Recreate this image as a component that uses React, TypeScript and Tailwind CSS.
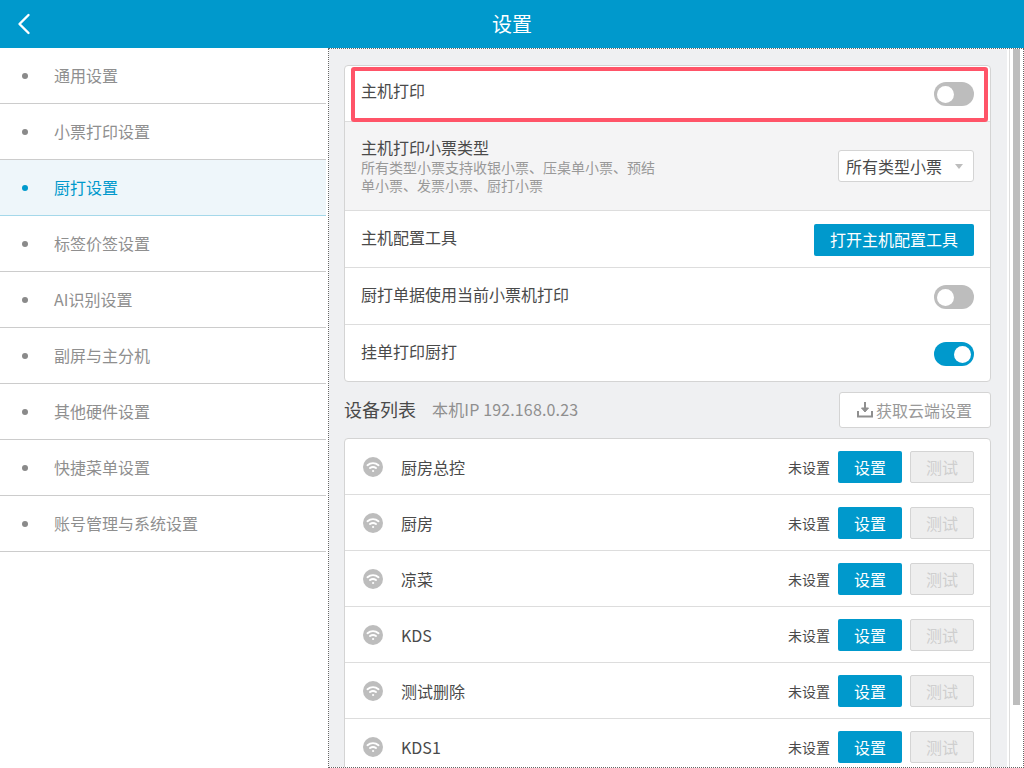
import React from 'react';

const menuItems = [
  '通用设置',
  '小票打印设置',
  '厨打设置',
  '标签价签设置',
  'AI识别设置',
  '副屏与主分机',
  '其他硬件设置',
  '快捷菜单设置',
  '账号管理与系统设置',
];

const devices = ['厨房总控', '厨房', '凉菜', 'KDS', '测试删除', 'KDS1'];

const Toggle = ({ on = false }: { on?: boolean }) => (
  <div
    className={`flex h-6 w-10 items-center rounded-full px-[3px] ${
      on ? 'justify-end bg-[#0099cc]' : 'justify-start bg-[#bdbdbd]'
    }`}
  >
    <div className="h-[17px] w-[17px] rounded-full bg-white" />
  </div>
);

const WifiBadge = () => (
  <div className="flex h-5 w-5 items-center justify-center rounded-full bg-[#bdbdbd]">
    <svg width="16" height="16" viewBox="0 0 16 16" fill="none" stroke="white" strokeWidth="2" strokeLinecap="round">
      <path d="M2.5 6.2c3.2-2.5 7.8-2.5 11 0" />
      <path d="M5 9c1.8-1.2 4.2-1.2 6 0" />
      <circle cx="8" cy="12" r="0.6" fill="white" strokeWidth="1" />
    </svg>
  </div>
);

export default function App() {
  return (
    <div className="flex h-[768px] w-[1024px] flex-col overflow-hidden bg-white font-['Noto_Sans_CJK_SC','Liberation_Sans',sans-serif] text-base text-[#4a4a4a]">
      {/* Header */}
      <div className="relative flex h-12 shrink-0 items-center justify-center bg-[#0099cc] text-xl text-white">
        <svg
          className="absolute top-[6px] left-[6px]"
          width="36"
          height="36"
          viewBox="0 0 24 24"
          fill="none"
          stroke="white"
          strokeWidth="1.6"
          strokeLinecap="round"
          strokeLinejoin="round"
        >
          <path d="M15 6l-6 6 6 6" />
        </svg>
        <span>设置</span>
      </div>

      <div className="flex min-h-0 flex-1">
        {/* Side menu */}
        <div className="w-[328px] shrink-0 pr-[2px]">
          {menuItems.map((item, i) => (
            <div
              key={item}
              className={`flex h-14 items-center border-b ${
                i === 2
                  ? 'border-[#a5d8ea] bg-[#eef6fa] text-[#0099cc]'
                  : 'border-[#cccccc] text-[#8f8f8f]'
              }`}
            >
              <div className={`ml-[22px] h-[6px] w-[6px] rounded-full ${i === 2 ? 'bg-[#0099cc]' : 'bg-[#8a8a8a]'}`} />
              <span className="ml-[26px] pb-[2px] leading-none">{item}</span>
            </div>
          ))}
        </div>

        {/* Content */}
        <div className="flex min-w-0 flex-1 border border-dotted border-[#666666]">
          <div className="w-[678px] shrink-0 overflow-hidden bg-[#eff0f2] pt-4 pl-[15px]">
            <div className="relative w-[647px] rounded-sm border border-[#d4d4d4] bg-white">
              <div className="h-[56px] border-b border-[#dddddd] pt-[12px] pl-4 leading-6">
                <span>主机打印</span>
              </div>
              <div className="absolute top-[1px] left-[6px] h-[55px] w-[637px] rounded-[3px] border-4 border-[#ff5468]" />
              <div className="absolute top-[16px] right-4">
                <Toggle />
              </div>

              <div className="flex h-[89px] items-center justify-between border-b border-[#dddddd] bg-[#f4f4f5] px-4">
                <div className="w-[300px]">
                  <div className="pb-[1px] text-base leading-[19px]">主机打印小票类型</div>
                  <div className="w-[300px] text-sm leading-[18px] text-[#999999]">
                    所有类型小票支持收银小票、压桌单小票、预结单小票、发票小票、厨打小票
                  </div>
                </div>
                <div className="flex h-8 w-[136px] items-center rounded-[3px] border border-[#d4d4d4] bg-white pl-[7px]">
                  <span>所有类型小票</span>
                  <div className="ml-[13px] h-0 w-0 border-x-[4px] border-t-[5px] border-x-transparent border-t-[#bdbdbd]" />
                </div>
              </div>

              <div className="flex h-[57px] items-center justify-between border-b border-[#dddddd] px-4">
                <span className="pb-1">主机配置工具</span>
                <button className="mt-[2px] h-8 w-[160px] rounded-[2px] bg-[#0099cc] pb-[2px] text-white">打开主机配置工具</button>
              </div>

              <div className="flex h-[57px] items-center justify-between border-b border-[#dddddd] px-4">
                <span className="pb-1">厨打单据使用当前小票机打印</span>
                <div className="mt-[2px]">
                  <Toggle />
                </div>
              </div>

              <div className="flex h-[56px] items-center justify-between px-4">
                <span className="pb-1">挂单打印厨打</span>
                <div className="mt-[2px]">
                  <Toggle on />
                </div>
              </div>
            </div>

            <div className="flex h-[56px] w-[647px] items-center justify-between">
              <div className="flex items-center pb-[3px]">
                <span className="text-lg">设备列表</span>
                <span className="ml-4 text-base tracking-[0.15px] text-[#8f8f8f]">本机IP 192.168.0.23</span>
              </div>
              <button className="flex h-9 w-[152px] items-center justify-end rounded-[3px] border border-[#d4d4d4] bg-white pr-[18px] text-[#999999]">
                <svg className="mr-[1px]" width="18" height="18" viewBox="0 0 18 18" fill="none" stroke="#8f8f8f" strokeWidth="2">
                  <path d="M8 1v7" />
                  <path d="M4.5 7 8 11l3.5-4z" fill="#8f8f8f" strokeWidth="1" />
                  <path d="M1 10v5.500h14v-5.500" />
                </svg>
                <span>获取云端设置</span>
              </button>
            </div>

            <div className="w-[647px] rounded-sm border border-[#d4d4d4] bg-white">
              {devices.map((name) => (
                <div key={name} className="flex h-14 items-center border-b border-[#dddddd] pr-4 pl-[18px]">
                  <WifiBadge />
                  <span className="ml-[18px] flex-1">{name}</span>
                  <span className="mr-2 text-sm">未设置</span>
                  <button className="h-8 w-16 rounded-[2px] bg-[#0099cc] text-white">设置</button>
                  <button className="ml-2 h-8 w-16 rounded-[2px] border border-[#d4d4d4] bg-[#eeeeee] text-[#cfcfcf]">
                    测试
                  </button>
                </div>
              ))}
            </div>
          </div>

          {/* Scroll track */}
          <div className="flex flex-1 pl-[2px]">
            <div className="flex flex-1 border-l border-[#dddddd] bg-white pl-[3px]">
              <div className="h-[656px] w-[7px] bg-[#bdbdbd]" />
            </div>
          </div>
        </div>
      </div>
    </div>
  );
}
